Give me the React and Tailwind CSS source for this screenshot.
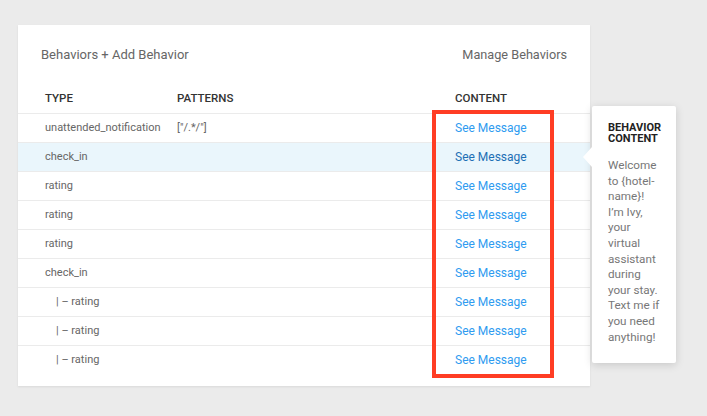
import React from "react";

const rows = [
  { type: "unattended_notification", pattern: '["/.*/"]' },
  { type: "check_in", active: true },
  { type: "rating" },
  { type: "rating" },
  { type: "rating" },
  { type: "check_in" },
  { type: "| – rating", child: true },
  { type: "| – rating", child: true },
  { type: "| – rating", child: true },
];

const App = () => {
  return (
    <div className="relative w-[707px] h-[416px] bg-[#ebebeb] pt-[25px] pl-[18px] font-['Roboto',sans-serif]">
      {/* Card */}
      <div className="w-[572px] h-[361px] bg-white shadow-[0_1px_2px_rgba(0,0,0,0.08)]">
        <div className="h-[60px] flex items-center justify-between px-[23px] text-[13px] text-[#666]">
          <span>Behaviors + Add Behavior</span>
          <span className="text-[12.7px]">Manage Behaviors</span>
        </div>
        <div className="grid grid-cols-[132px_278px_1fr] pl-[27px] h-[28px] items-center text-[11.5px] font-medium text-[#333]">
          <span>TYPE</span>
          <span>PATTERNS</span>
          <span>CONTENT</span>
        </div>
        {rows.map((r, i) => (
          <div
            key={i}
            className={`grid grid-cols-[132px_278px_1fr] pl-[27px] h-[29px] items-center border-t border-[#ebebeb] ${r.active ? "bg-[#eaf6fc]" : ""}`}
          >
            <span className={`text-[11px] text-[#666] ${r.child ? "pl-[11px]" : ""}`}>{r.type}</span>
            <span className="text-[11px] text-[#666]">{r.pattern || ""}</span>
            <span className={`text-[12px] ${r.active ? "text-[#1e6fb5]" : "text-[#2f9bf0]"}`}>See Message</span>
          </div>
        ))}
      </div>

      {/* Annotation box */}
      <div className="absolute left-[432px] top-[110px] w-[122px] h-[268px] border-4 border-[#ff3d24]" />

      {/* Popover */}
      <div className="absolute left-[592px] top-[106px] w-[84px] h-[257px] bg-white rounded-[2px] shadow-[0_2px_8px_rgba(0,0,0,0.15)] px-[16px] pt-[16px]">
        <div className="absolute left-[-9px] top-[41px] w-0 h-0 border-y-[10px] border-y-transparent border-r-[9px] border-r-white" />
        <div className="text-[11px] leading-[11px] font-bold text-[#222]">BEHAVIOR CONTENT</div>
        <div className="mt-[14px] text-[11.7px] leading-[15.6px] text-[#777]">
          Welcome to {"{hotel-name}"}! I’m Ivy, your virtual assistant during your stay. Text me if you need anything!
        </div>
      </div>
    </div>
  );
};

export default App;
